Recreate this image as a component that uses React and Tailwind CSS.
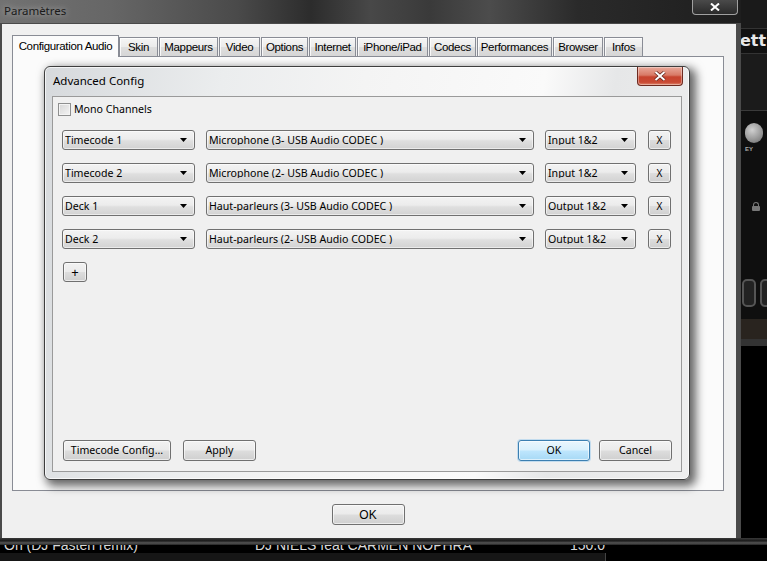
import React from "react";

function Combo({ className, text }) {
  return (
    <div
      className={
        "flex h-[20px] items-center rounded-[3px] border border-[#707070] bg-[linear-gradient(180deg,#f3f3f3_0%,#ececec_45%,#dfdfdf_55%,#d2d2d2_100%)] pl-[2px] pr-[7px] shadow-[inset_0_0_0_1px_rgba(255,255,255,0.55)] " +
        className
      }
    >
      <span className="flex-1 truncate whitespace-pre text-[10.6px] leading-none text-black">{text}</span>
      <svg width="7" height="4" viewBox="0 0 7 4" className="shrink-0">
        <path d="M0 0H7L3.5 4Z" fill="#000" />
      </svg>
    </div>
  );
}

function Btn({ className, children, focus }) {
  const base = focus
    ? "border-[#3c7fb1] bg-[linear-gradient(180deg,#eaf6fd_0%,#d9f0fc_48%,#bee6fd_52%,#a7d9f5_100%)] shadow-[inset_0_0_0_1px_rgba(255,255,255,0.6),0_0_0_1px_rgba(60,160,230,0.25)]"
    : "border-[#707070] bg-[linear-gradient(180deg,#f2f2f2_0%,#ebebeb_48%,#dddddd_52%,#cfcfcf_100%)] shadow-[inset_0_0_0_1px_rgba(255,255,255,0.6)]";
  return (
    <div
      className={
        "flex items-center justify-center rounded-[3px] border leading-none text-black " +
        base +
        " " +
        className
      }
    >
      {children}
    </div>
  );
}

function Tab({ className, children, selected }) {
  if (selected) {
    return (
      <div
        className={
          "relative z-10 -mb-px flex h-[22px] items-center justify-center border border-b-0 border-[#898c95] bg-[#fbfbfb] font-['Liberation_Sans',sans-serif] text-[11.5px] tracking-[-0.35px] text-black " +
          className
        }
      >
        {children}
      </div>
    );
  }
  return (
    <div
      className={
        "flex h-[19px] items-center justify-center border border-b-0 border-[#898c95] bg-[linear-gradient(180deg,#f5f5f5_0%,#ebebeb_50%,#dedede_51%,#d6d6d6_100%)] pt-[1px] font-['Liberation_Sans',sans-serif] text-[11.5px] tracking-[-0.35px] text-black shadow-[inset_1px_1px_0_rgba(255,255,255,0.8)] " +
        className
      }
    >
      {children}
    </div>
  );
}

function DialogRow({ a, b, c }) {
  return (
    <div className="flex items-center">
      <Combo className="w-[133px]" text={a} />
      <Combo className="ml-[11px] w-[328px]" text={b} />
      <Combo className="ml-[11px] w-[91px]" text={c} />
      <Btn className="ml-[12px] h-[20px] w-[23px] text-[10px]">X</Btn>
    </div>
  );
}

export default function App() {
  return (
    <div className="relative h-[561px] w-[767px] overflow-hidden bg-[#0e0e0e] font-['Noto_Sans',sans-serif]">
      <div className="flex h-[538px]">
        {/* Main window */}
        <div className="flex w-[741px] shrink-0 flex-col">
          {/* title bar */}
          <div className="flex h-[23px] items-start bg-[linear-gradient(90deg,#727272_0%,#666_15%,#4a4a4a_32%,#2c2c2c_42%,#484848_50%,#3a3a3a_58%,#4c4c4c_66%,#2a2a2a_78%,#1e1e1e_100%)]">
            <span className="ml-[4px] mt-[2px] text-[11.5px] text-[#1a1a1a] [text-shadow:0_0_6px_rgba(255,255,255,0.55)]">
              Paramètres
            </span>
            <div className="ml-auto mr-[3px] flex h-[15px] w-[46px] items-center justify-center rounded-b-[4px] border border-t-0 border-[#a0a0a0] bg-[linear-gradient(180deg,#4a4a4a,#2a2a2a)]">
              <svg width="10" height="8" viewBox="0 0 10 8">
                <path d="M1 0.5L9 7.5M9 0.5L1 7.5" stroke="#fff" strokeWidth="2" />
              </svg>
            </div>
          </div>
          {/* body */}
          <div className="flex flex-1 flex-col border-l-[2px] border-r-[5px] border-t border-[#4a4a4a] bg-[#f0f0f0] pl-[10px] pr-[12px] pt-[11px]">
            <div className="flex items-end">
              <Tab selected className="w-[107px]">Configuration Audio</Tab>
              <Tab className="w-[39px]">Skin</Tab>
              <Tab className="ml-[1px] w-[59px]">Mappeurs</Tab>
              <Tab className="ml-[1px] w-[41px]">Video</Tab>
              <Tab className="ml-[1px] w-[47px]">Options</Tab>
              <Tab className="ml-[1px] w-[47px]">Internet</Tab>
              <Tab className="ml-[1px] w-[71px]">iPhone/iPad</Tab>
              <Tab className="ml-[1px] w-[47px]">Codecs</Tab>
              <Tab className="ml-[1px] w-[75px]">Performances</Tab>
              <Tab className="ml-[1px] w-[50px]">Browser</Tab>
              <Tab className="ml-[1px] w-[39px]">Infos</Tab>
            </div>
            <div className="h-[435px] border border-[#898c95] bg-[#fbfbfb]" />
            <div className="mt-[13px] flex justify-center">
              <div className="flex h-[21px] w-[73px] items-center justify-center rounded-[3px] border border-[#707070] bg-[linear-gradient(180deg,#f2f2f2_0%,#ebebeb_48%,#dddddd_52%,#cfcfcf_100%)] font-['Liberation_Sans',sans-serif] text-[12px] text-black shadow-[inset_0_0_0_1px_rgba(255,255,255,0.6)]">
                OK
              </div>
            </div>
          </div>
        </div>
        {/* background app strip on the right */}
        <div className="flex min-w-0 flex-1 flex-col overflow-hidden bg-[#0f0f0f]">
          <div className="h-[28px] bg-[#1a1a1a]" />
          <div className="flex h-[26px] items-center overflow-hidden border-y border-[#333] bg-[#111]">
            <span className="-ml-[1px] font-['DejaVu_Sans',sans-serif] text-[16px] font-bold leading-none text-[#e8e8ea]">ett</span>
          </div>
          <div className="h-[56px] bg-[#1b1b1b]" />
          <div className="h-px bg-[#3a3a3a]" />
          <div className="flex flex-col items-start pl-[4px] pt-[12px]">
            <div className="h-[20px] w-[18px] rounded-full bg-[radial-gradient(circle_at_40%_35%,#d0d0d0,#8a8a8a_70%,#555)]" />
            <span className="mt-[3px] font-['Liberation_Sans',sans-serif] text-[6px] font-bold leading-none text-[#aaa]">EY</span>
          </div>
          <div className="ml-[11px] mt-[50px] flex flex-col items-center self-start">
            <div className="h-[4px] w-[6px] rounded-t-[3px] border-[1.5px] border-b-0 border-[#777]" />
            <div className="h-[5px] w-[8px] rounded-[1px] bg-[#777]" />
          </div>
          <div className="mt-[68px] flex gap-[4px] pl-[1px]">
            <div className="h-[28px] w-[14px] shrink-0 rounded-[5px] border-2 border-[#555] bg-[#222]" />
            <div className="h-[28px] w-[14px] shrink-0 rounded-[5px] border-2 border-[#555] bg-[#222]" />
          </div>
          <div className="mt-[12px] h-[20px] bg-[#29241f]" />
          <div className="h-[7px] bg-[#333]" />
          <div className="flex-1 bg-black" />
        </div>
      </div>
      {/* bottom strip of background app */}
      <div className="flex h-[23px] flex-col">
        <div className="h-[7px] bg-[linear-gradient(180deg,#3a3a3a,#1a1a1a_40%,#555_70%,#222)]" />
        <div className="relative flex h-[8px] overflow-hidden bg-black font-['Liberation_Sans',sans-serif] text-[14px] leading-[14px] text-[#d8d8d8]">
          <span className="-mt-[7px] ml-[4px] w-[251px] shrink-0">On (DJ Fasten remix)</span>
          <span className="-mt-[7px] w-[315px] shrink-0">DJ NIELS feat CARMEN NOPHRA</span>
          <span className="-mt-[7px]">150.0</span>
        </div>
        <div className="flex flex-1">
          <div className="w-[606px] border-r border-[#444] bg-[#161616]" />
          <div className="flex-1 bg-black" />
        </div>
      </div>

      {/* Advanced Config dialog window */}
      <div className="absolute left-[44px] top-[66px] flex h-[414px] w-[646px] flex-col rounded-[6px] border border-[#3e3e3e] bg-[linear-gradient(100deg,#d6d9dc_0%,#ebedee_25%,#f4f4f4_45%,#fafafa_70%,#e6e7e8_80%,#efefef_100%)] px-[7px] pb-[7px] shadow-[4px_4px_10px_2px_rgba(0,0,0,0.6),inset_0_0_0_1px_rgba(255,255,255,0.7)]">
        <div className="flex h-[29px] items-start">
          <span className="ml-[1px] mt-[5px] text-[11.5px] text-black">Advanced Config</span>
          <div className="ml-auto mr-[-1px] flex h-[19px] w-[46px] items-center justify-center rounded-b-[4px] border border-t-0 border-[#6d2a20] bg-[linear-gradient(180deg,#e9a99a_0%,#d87a66_45%,#c7442e_55%,#c94a34_85%,#e08a70_100%)] shadow-[inset_0_0_0_1px_rgba(255,255,255,0.35)]">
            <svg width="12" height="10" viewBox="0 0 12 10">
              <path d="M1.5 1L10.5 9M10.5 1L1.5 9" stroke="#5a1d14" strokeWidth="3.4" />
              <path d="M1.5 1L10.5 9M10.5 1L1.5 9" stroke="#fff" strokeWidth="2" />
            </svg>
          </div>
        </div>
        <div className="flex flex-1 flex-col border border-[#9a9a9a] bg-[#f0f0f0] pb-[10px] pl-[9px] pr-[9px] pt-[6px]">
          <div className="-ml-[4px] flex items-center">
            <div className="h-[13px] w-[13px] border border-[#8e8f8f] bg-[linear-gradient(135deg,#d6d6d6,#f4f4f4)] shadow-[inset_0_0_0_1px_#f4f4f4]" />
            <span className="ml-[3px] text-[10.6px] leading-none text-black">Mono Channels</span>
          </div>
          <div className="mt-[14px] flex flex-col gap-[13px]">
            <DialogRow a="Timecode 1" b="Microphone (3- USB Audio CODEC )" c="Input 1&2" />
            <DialogRow a="Timecode 2" b="Microphone (2- USB Audio CODEC )" c="Input 1&2" />
            <DialogRow a="Deck 1" b="Haut-parleurs (3- USB Audio CODEC )" c="Output 1&2" />
            <DialogRow a="Deck 2" b="Haut-parleurs (2- USB Audio CODEC )" c="Output 1&2" />
          </div>
          <div className="ml-[1px] mt-[13px] flex">
            <Btn className="h-[20px] w-[24px] text-[13px]">+</Btn>
          </div>
          <div className="flex-1" />
          <div className="flex items-center">
            <Btn className="ml-[1px] h-[21px] w-[108px] text-[10.6px]">Timecode Config...</Btn>
            <Btn className="ml-[12px] h-[21px] w-[73px] text-[10.6px]">Apply</Btn>
            <Btn focus className="ml-auto h-[21px] w-[72px] text-[10.6px]">OK</Btn>
            <Btn className="ml-[9px] h-[21px] w-[73px] text-[10.6px]">Cancel</Btn>
          </div>
        </div>
      </div>
    </div>
  );
}
